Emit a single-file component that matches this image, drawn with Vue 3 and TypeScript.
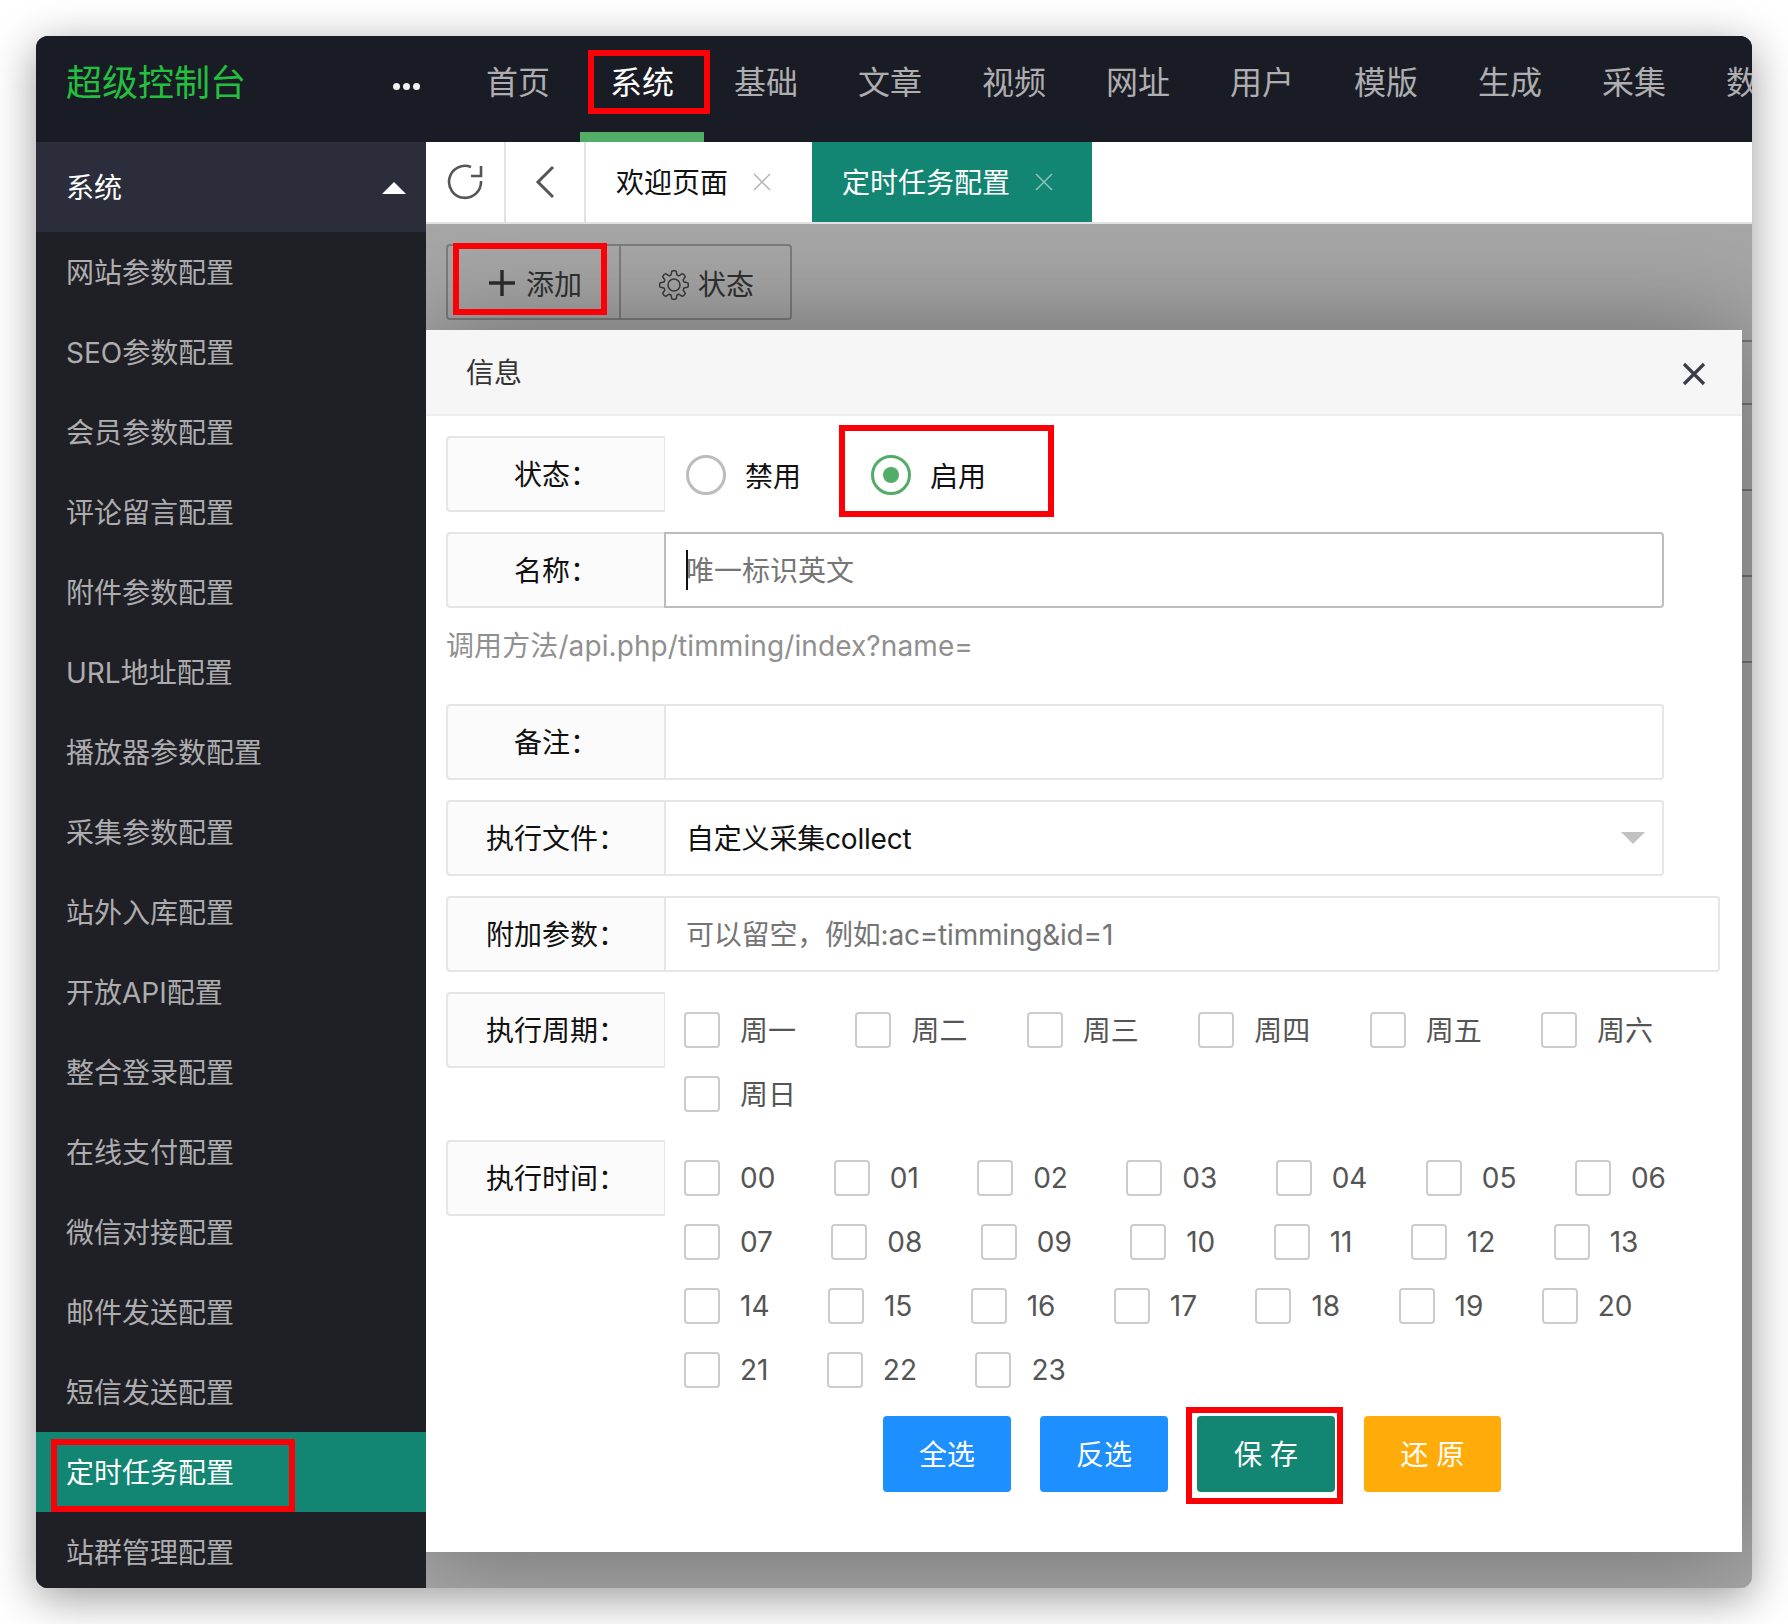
<script setup lang="ts">
const navItems: string[] = ['首页', '系统', '基础', '文章', '视频', '网址', '用户', '模版', '生成', '采集', '数据']
const menuItems: string[] = [
  '网站参数配置', 'SEO参数配置', '会员参数配置', '评论留言配置', '附件参数配置', 'URL地址配置',
  '播放器参数配置', '采集参数配置', '站外入库配置', '开放API配置', '整合登录配置', '在线支付配置',
  '微信对接配置', '邮件发送配置', '短信发送配置', '定时任务配置', '站群管理配置'
]
const weekdays: string[] = ['周一', '周二', '周三', '周四', '周五', '周六', '周日']
const hours: string[] = Array.from({ length: 24 }, (_, i) => String(i).padStart(2, '0'))

function gearPath(teeth: number, outer: number, root: number, c: number): string {
  const pts: string[] = []
  const step = (Math.PI * 2) / teeth
  for (let i = 0; i < teeth; i++) {
    const a = i * step - Math.PI / 2
    const p = (r: number, o: number) => `${(c + r * Math.cos(a + o)).toFixed(2)} ${(c + r * Math.sin(a + o)).toFixed(2)}`
    pts.push(`${i === 0 ? 'M' : 'L'}${p(root, -step * 0.36)}`)
    pts.push(`L${p(outer, -step * 0.2)}`)
    pts.push(`Q${p(outer + 0.8, 0)} ${p(outer, step * 0.2)}`)
    pts.push(`L${p(root, step * 0.36)}`)
    pts.push(`Q${p(root - 0.4, step * 0.5)} ${p(root, step * 0.64)}`)
  }
  return pts.join(' ') + ' Z'
}
const gear = gearPath(8, 14, 10.5, 15)
</script>

<template>
  <div class="stage">
    <div class="window">
      <header class="topbar">
        <div class="logo">超级控制台</div>
        <div class="dots"><i></i><i></i><i></i></div>
        <nav class="nav">
          <a v-for="item in navItems" :key="item" class="nav-item" :class="{ on: item === '系统' }">{{ item }}</a>
        </nav>
      </header>
      <div class="body">
        <aside class="side">
          <div class="side-head"><span>系统</span><i class="tri"></i></div>
          <a v-for="m in menuItems" :key="m" class="side-item" :class="{ on: m === '定时任务配置' }">{{ m }}</a>
        </aside>
        <main class="main">
          <div class="tabs">
            <div class="tool">
              <svg width="36" height="36" viewBox="0 0 36 36" fill="none" stroke="#555" stroke-width="2.6">
                <path d="M24 3 A16 16 0 1 0 34 17" />
                <path d="M34 2 V12 H24" />
              </svg>
            </div>
            <div class="tool">
              <svg width="20" height="34" viewBox="0 0 20 34" fill="none" stroke="#555" stroke-width="3">
                <path d="M18 2 L3 17 L18 32" />
              </svg>
            </div>
            <div class="tab">
              <span>欢迎页面</span>
              <svg class="tab-x" width="18" height="18" viewBox="0 0 18 18" stroke="#b4b4b4" stroke-width="1.5"><path d="M1 1 L17 17 M17 1 L1 17" /></svg>
            </div>
            <div class="tab active">
              <span>定时任务配置</span>
              <svg class="tab-x" width="18" height="18" viewBox="0 0 18 18" stroke="#8fc4ba" stroke-width="1.5"><path d="M1 1 L17 17 M17 1 L1 17" /></svg>
            </div>
          </div>
          <div class="content">
            <div class="toolbar">
              <div class="tb-btn add">
                <svg width="26" height="26" viewBox="0 0 26 26" stroke="#2c2c2c" stroke-width="3.4"><path d="M13 0 V26 M0 13 H26" /></svg>
                <span>添加</span>
              </div>
              <div class="tb-btn state">
                <svg class="gear" width="30" height="30" viewBox="0 0 30 30" fill="none" stroke="#3a3a3a" stroke-width="1.5">
                  <path :d="gear" />
                  <circle cx="15" cy="15" r="6" />
                </svg>
                <span>状态</span>
              </div>
            </div>
            <div class="strip"></div>
            <section class="modal">
              <div class="modal-head">
                <span>信息</span>
                <svg class="modal-x" width="24" height="24" viewBox="0 0 24 24" stroke="#3c3c48" stroke-width="3.2"><path d="M2 2 L22 22 M22 2 L2 22" /></svg>
              </div>
              <div class="modal-body">
                <div class="row">
                  <label class="lab">状态：</label>
                  <div class="radios">
                    <span class="radio"></span><span class="radio-text">禁用</span>
                    <span class="radio checked"><i></i></span><span class="radio-text">启用</span>
                  </div>
                </div>
                <div class="row">
                  <label class="lab">名称：</label>
                  <div class="field focus">
                    <i class="caret"></i><span class="ph">唯一标识英文</span>
                  </div>
                </div>
                <div class="hint">调用方法/api.php/timming/index?name=</div>
                <div class="row">
                  <label class="lab">备注：</label>
                  <div class="field"></div>
                </div>
                <div class="row">
                  <label class="lab">执行文件：</label>
                  <div class="field select"><span class="tight">自定义采集collect</span><i class="sel-arrow"></i></div>
                </div>
                <div class="row">
                  <label class="lab">附加参数：</label>
                  <div class="field wide"><span class="ph tight">可以留空，例如:ac=timming&amp;id=1</span></div>
                </div>
                <div class="row top">
                  <label class="lab">执行周期：</label>
                  <div class="checks">
                    <div v-for="d in weekdays" :key="d" class="check week"><i></i><span>{{ d }}</span></div>
                  </div>
                </div>
                <div class="row top">
                  <label class="lab">执行时间：</label>
                  <div class="checks">
                    <div v-for="h in hours" :key="h" class="check hour"><i></i><span>{{ h }}</span></div>
                  </div>
                </div>
                <div class="actions">
                  <button class="btn blue">全选</button>
                  <button class="btn blue">反选</button>
                  <button class="btn teal">保 存</button>
                  <button class="btn orange">还 原</button>
                </div>
              </div>
            </section>
          </div>
        </main>
      </div>
    </div>
    <div class="mark m-nav"></div>
    <div class="mark m-add"></div>
    <div class="mark m-radio"></div>
    <div class="mark m-side"></div>
    <div class="mark m-save"></div>
  </div>
</template>

<style>
html, body { margin: 0; background: #fff; }
</style>

<style scoped>
* { box-sizing: border-box; }
.stage {
  position: relative;
  width: 1788px;
  height: 1624px;
  padding: 36px;
  overflow: hidden;
  background: #fff;
  font-family: Inter, "Noto Sans CJK SC", sans-serif;
  font-size: 28px;
  color: #222;
}
.window {
  width: 1716px;
  height: 1552px;
  border-radius: 12px;
  overflow: hidden;
  background: #1f2025;
  box-shadow: 0 10px 45px rgba(0, 0, 0, 0.4);
  display: flex;
  flex-direction: column;
}
.topbar {
  height: 106px;
  flex: none;
  background: #1a1c25;
  display: flex;
  overflow: hidden;
}
.logo {
  width: 357px;
  flex: none;
  padding: 0 0 18px 30px;
  display: flex;
  align-items: center;
  font-size: 36px;
  color: #22c03e;
}
.dots {
  width: 63px;
  flex: none;
  display: flex;
  gap: 3px;
  padding-top: 47px;
  align-items: flex-start;
}
.dots i {
  width: 7px;
  height: 7px;
  border-radius: 50%;
  background: #f2f2f2;
}
.nav { display: flex; }
.nav-item {
  position: relative;
  width: 124px;
  flex: none;
  height: 106px;
  padding-bottom: 18px;
  display: flex;
  align-items: center;
  justify-content: center;
  font-size: 32px;
  color: #aeaeb0;
}
.nav-item.on { color: #fff; }
.nav-item.on::after {
  content: "";
  position: absolute;
  left: 0;
  right: 0;
  bottom: 0;
  height: 10px;
  background: #52ad68;
}
.body { flex: 1; display: flex; min-height: 0; }
.side {
  width: 390px;
  flex: none;
  background: #1f2025;
  overflow: hidden;
}
.side-head {
  height: 90px;
  background: #2b2e3a;
  color: #fff;
  padding: 0 20px 2px 30px;
  display: flex;
  align-items: center;
  justify-content: space-between;
}
.tri {
  width: 0;
  height: 0;
  margin-top: 4px;
  border-left: 12px solid transparent;
  border-right: 12px solid transparent;
  border-bottom: 12px solid #fff;
}
.side-item {
  height: 80px;
  display: flex;
  align-items: center;
  padding: 0 0 3px 30px;
  color: #adadaf;
}
.side-item.on { background: #128672; color: #fff; }
.main {
  flex: 1;
  min-width: 0;
  display: flex;
  flex-direction: column;
  background: #fff;
}
.tabs {
  height: 82px;
  flex: none;
  display: flex;
  background: #fff;
  border-bottom: 2px solid #e2e2e2;
}
.tool {
  width: 80px;
  height: 80px;
  flex: none;
  border-right: 2px solid #e2e2e2;
  display: flex;
  align-items: center;
  justify-content: center;
}
.tab {
  height: 80px;
  display: flex;
  align-items: center;
  padding: 0 41px 2px 30px;
  color: #111;
}
.tab-x { margin-left: 25px; margin-top: 2px; }
.tab.active {
  background: #128672;
  color: #fff;
  padding-left: 30px;
  padding-right: 39px;
  margin-right: 2px;
}
.content {
  position: relative;
  flex: 1;
  min-height: 0;
  background: #a6a6a6;
  overflow: hidden;
}
.toolbar {
  position: absolute;
  left: 20px;
  top: 20px;
  width: 346px;
  height: 76px;
  display: flex;
  border: 2px solid #7c7c7c;
  border-radius: 4px;
  color: #303030;
}
.tb-btn {
  display: flex;
  align-items: center;
  height: 100%;
  padding-top: 2px;
}
.add { width: 173px; padding-left: 41px; gap: 11px; border-right: 2px solid #7c7c7c; }
.state { flex: 1; padding-left: 38px; gap: 9px; }
.gear { margin-top: 4px; }
.strip {
  position: absolute;
  right: 0;
  top: 179px;
  width: 12px;
  height: 260px;
  z-index: 3;
  background: repeating-linear-gradient(to bottom, #757575 0, #757575 2px, transparent 2px, transparent 86px);
}
.strip::before {
  content: "";
  position: absolute;
  left: 0;
  right: 0;
  top: -63px;
  height: 2px;
  background: #757575;
}
.modal {
  position: absolute;
  left: 0;
  top: 106px;
  width: 1316px;
  height: 1222px;
  background: #fff;
  border-radius: 0 4px 0 0;
  box-shadow: 0 0 100px rgba(0, 0, 0, 0.36);
  z-index: 4;
}
.modal-head {
  height: 86px;
  background: #f6f6f6;
  border-bottom: 2px solid #eee;
  padding: 0 36px 2px 40px;
  display: flex;
  align-items: center;
  justify-content: space-between;
  color: #333;
}
.modal-x { margin-top: 5px; }
.modal-body { padding: 20px 0 0 20px; }
.row {
  display: flex;
  margin-bottom: 20px;
}
.row.top { align-items: flex-start; margin-bottom: 0; }
.lab {
  width: 219px;
  height: 76px;
  flex: none;
  padding-bottom: 2px;
  display: flex;
  align-items: center;
  justify-content: center;
  background: #fbfbfb;
  border: 2px solid #e6e6e6;
  border-right-width: 1px;
  border-radius: 4px 0 0 4px;
  color: #111;
}
.radios {
  display: flex;
  align-items: center;
  height: 76px;
  padding: 2px 0 0 21px;
}
.radio {
  width: 40px;
  height: 40px;
  flex: none;
  border: 3px solid #bcbcbc;
  border-radius: 50%;
  display: flex;
  align-items: center;
  justify-content: center;
}
.radio.checked { border-color: #52ad68; margin-left: 70px; }
.radio.checked i {
  width: 16px;
  height: 16px;
  border-radius: 50%;
  background: #52ad68;
}
.radio-text { margin: 0 0 1px 19px; color: #111; }
.field {
  position: relative;
  width: 1000px;
  height: 76px;
  margin-left: -1px;
  padding: 0 0 2px 20px;
  display: flex;
  align-items: center;
  background: #fff;
  border: 2px solid #e6e6e6;
  border-radius: 0 4px 4px 0;
  color: #111;
}
.field.focus { border-color: #bdbdbd; }
.field.wide { width: 1056px; }
.field.select { justify-content: space-between; padding-right: 17px; }
.tight { letter-spacing: -0.2px; }
.ph { color: #757575; }
.caret {
  position: absolute;
  left: 20px;
  top: 16px;
  width: 2px;
  height: 40px;
  background: #111;
}
.sel-arrow {
  width: 0;
  height: 0;
  margin-top: 2px;
  border-left: 12px solid transparent;
  border-right: 12px solid transparent;
  border-top: 12px solid #c2c2c2;
}
.hint {
  height: 56px;
  line-height: 36px;
  margin-bottom: 20px;
  letter-spacing: 0.1px;
  color: #909090;
}
.checks {
  width: 1070px;
  flex: none;
  margin-left: 19px;
  padding-top: 20px;
  display: flex;
  flex-wrap: wrap;
}
.check {
  display: flex;
  align-items: center;
  height: 36px;
  margin: 0 59.4px 28px 0;
  color: #555;
}
.check.hour { margin-right: 58.4px; }
.check.week span { margin-bottom: 3px; }
.check i {
  width: 36px;
  height: 36px;
  margin-right: 20px;
  background: #fff;
  border: 2px solid #ccc;
  border-radius: 4px;
}
.actions {
  display: flex;
  gap: 29px;
  padding-left: 437px;
}
.btn {
  height: 76px;
  width: 128px;
  border: 0;
  border-radius: 4px;
  padding: 0 0 2px;
  color: #fff;
  font: inherit;
}
.blue { background: #1e8fff; }
.teal { background: #128672; width: 138px; }
.orange { background: #ffab0a; width: 137px; }
.mark {
  position: absolute;
  border: 6px solid #fb0007;
  z-index: 10;
}
.m-nav { left: 588px; top: 50px; width: 122px; height: 64px; }
.m-add { left: 453px; top: 243px; width: 154px; height: 72px; }
.m-radio { left: 839px; top: 425px; width: 215px; height: 92px; }
.m-side { left: 51px; top: 1439px; width: 244px; height: 73px; }
.m-save { left: 1186px; top: 1407px; width: 157px; height: 97px; }
</style>
